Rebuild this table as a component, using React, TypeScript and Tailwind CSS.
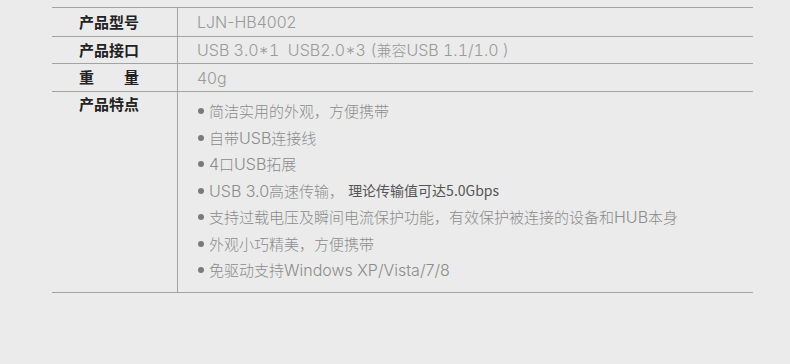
const FONT = "font-['Noto_Sans_CJK_SC','Noto_Sans',sans-serif]";

const features: { text: string; extra?: string }[] = [
  { text: "简洁实用的外观，方便携带" },
  { text: "自带USB连接线" },
  { text: "4口USB拓展" },
  { text: "USB 3.0高速传输，", extra: "理论传输值可达5.0Gbps" },
  { text: "支持过载电压及瞬间电流保护功能，有效保护被连接的设备和HUB本身" },
  { text: "外观小巧精美，方便携带" },
  { text: "免驱动支持Windows XP/Vista/7/8" },
];

// latin runs use a wider thin face, like the original page
function Mixed({ text, tab }: { text: string; tab?: boolean }) {
  const parts = text.split(/([\x20-\x7e]+)/).filter(Boolean);
  return (
    <>
      {parts.map((p, i) =>
        /^[\x20-\x7e]+$/.test(p) ? (
          <span
            key={i}
            className={
              tab
                ? "font-['Inter',sans-serif] text-[16px] font-light tabular-nums whitespace-pre"
                : "font-['Inter',sans-serif] text-[16px] font-light whitespace-pre"
            }
          >
            {p}
          </span>
        ) : (
          <span key={i}>{p}</span>
        )
      )}
    </>
  );
}

function Label({ children }: { children: React.ReactNode }) {
  return <div className="w-[60px] text-[15px] font-bold text-[#222]">{children}</div>;
}

export default function App() {
  return (
    <div className={`h-[364px] w-full bg-[#ebebeb] pt-[7px] ${FONT}`}>
      <div className="ml-[52px] w-[701px] border-t border-[#a3a3a3]">
        {/* 产品型号 */}
        <div className="flex h-[29px] border-b border-[#a3a3a3]">
          <div className="flex w-[126px] items-center border-r border-[#a3a3a3] pl-[27px]">
            <Label>产品型号</Label>
          </div>
          <div className="flex items-center pl-[19px] text-[15px] font-light text-[#9a9a9a]">
            <Mixed text="LJN-HB4002" />
          </div>
        </div>

        {/* 产品接口 */}
        <div className="flex h-[27px] border-b border-[#a3a3a3]">
          <div className="flex w-[126px] items-center border-r border-[#a3a3a3] pl-[27px]">
            <Label>产品接口</Label>
          </div>
          <div className="flex items-center pl-[19px] text-[15px] font-light text-[#9a9a9a]">
            <Mixed text="USB 3.0*1  USB2.0*3 (兼容USB 1.1/1.0 )" tab />
          </div>
        </div>

        {/* 重量 */}
        <div className="flex h-[28px] border-b border-[#a3a3a3]">
          <div className="flex w-[126px] items-center border-r border-[#a3a3a3] pl-[27px]">
            <div className="flex w-[60px] justify-between text-[15px] font-bold text-[#222]">
              <span>重</span>
              <span>量</span>
            </div>
          </div>
          <div className="flex items-center pl-[19px] text-[15px] font-light text-[#9a9a9a]">
            <Mixed text="40g" />
          </div>
        </div>

        {/* 产品特点 */}
        <div className="flex h-[201px] border-b border-[#a3a3a3]">
          <div className="w-[126px] border-r border-[#a3a3a3] pl-[27px] pt-[1px]">
            <Label>产品特点</Label>
          </div>
          <ul className="pl-[20px] pt-[6px]">
            {features.map((f) => (
              <li
                key={f.text}
                className="flex h-[26.5px] items-center text-[15px] font-light text-[#8c8c8c]"
              >
                <span className="mr-[5px] h-[6px] w-[6px] rounded-full bg-[#7a7a7a]" />
                <span>
                  <Mixed text={f.text} />
                </span>
                {f.extra && (
                  <span className="ml-[4px] text-[14px] font-normal text-[#555]">{f.extra}</span>
                )}
              </li>
            ))}
          </ul>
        </div>
      </div>
    </div>
  );
}
